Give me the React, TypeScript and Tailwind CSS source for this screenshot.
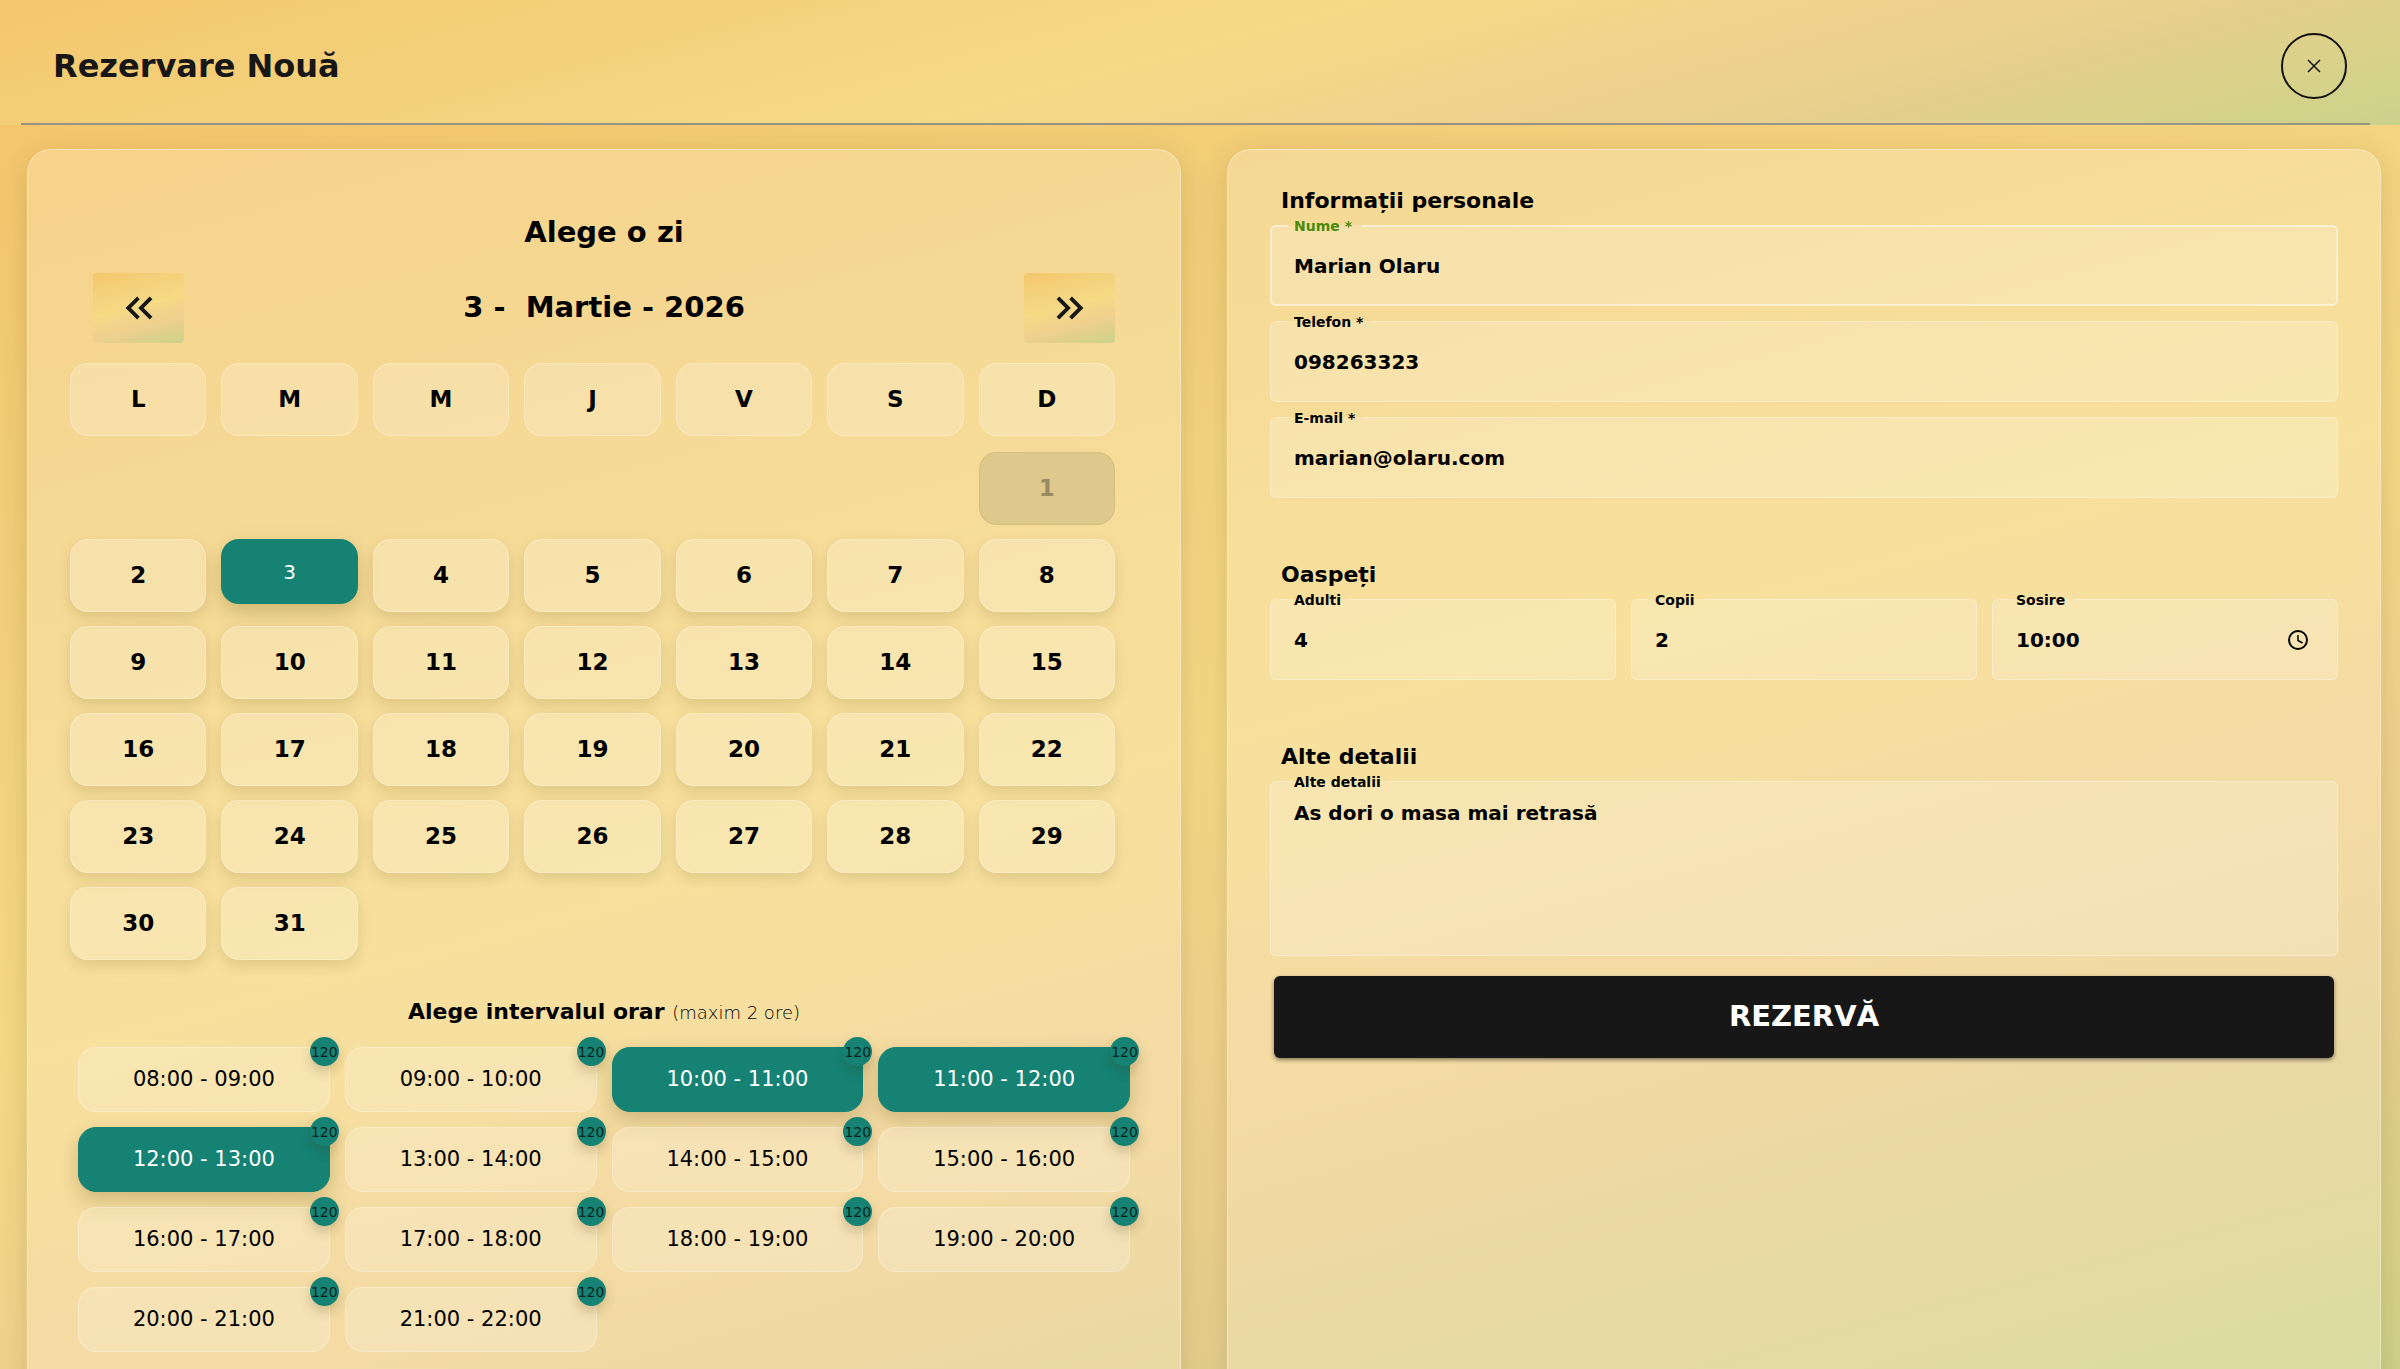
import { useState } from "react";
import type { ReactNode } from "react";
import { MdKeyboardDoubleArrowLeft, MdKeyboardDoubleArrowRight } from "react-icons/md";

const weekdays = ["L", "M", "M", "J", "V", "S", "D"];
const days = Array.from({ length: 31 }, (_, i) => i + 1);
const hours = Array.from({ length: 14 }, (_, i) => i + 8);
const label = (h: number) => `${String(h).padStart(2, "0")}:00 - ${String(h + 1).padStart(2, "0")}:00`;

const sunset =
  "bg-[linear-gradient(165deg,#f5c76d_0%,#f3d07a_22%,#f6da85_48%,#f2d38c_62%,#efd18e_70%,#e4cf8d_80%,#dad28a_89%,#cad28b_100%)]";
const panel =
  "rounded-3xl border border-white/35 bg-white/20 px-[42px] pb-16 shadow-[0_8px_32px_rgba(60,45,0,0.16)]";
const cell =
  "flex h-[73px] items-center justify-center rounded-[18px] border border-white/25 bg-white/20 text-[23px] font-bold";
const control = "h-full w-full bg-transparent px-6 text-xl font-bold text-black outline-none";

function Field({
  id,
  title,
  active = false,
  tall = false,
  children,
}: {
  id: string;
  title: string;
  active?: boolean;
  tall?: boolean;
  children: ReactNode;
}) {
  return (
    <div className={`relative rounded-md bg-white/20 ${tall ? "h-[175px]" : "h-[81px]"}`}>
      <label
        htmlFor={id}
        className={`absolute -top-[11px] left-6 text-sm leading-6 font-bold ${active ? "text-[#4b8a08]" : "text-black"}`}
      >
        {title}
      </label>
      <fieldset
        aria-hidden="true"
        className={`pointer-events-none absolute inset-0 rounded-md px-4 ${
          active ? "border-2 border-white/45" : "border border-white/30"
        }`}
      >
        <legend className="invisible h-0 px-2 text-sm font-bold">{title}</legend>
      </fieldset>
      {children}
    </div>
  );
}

function NavButton({ title, children }: { title: string; children: ReactNode }) {
  return (
    <button
      type="button"
      aria-label={title}
      className={`flex h-[70px] w-[91px] items-center justify-center rounded text-[#171717] ${sunset}`}
    >
      {children}
    </button>
  );
}

function SectionTitle({ children }: { children: ReactNode }) {
  return <h2 className="pl-[11px] text-[22px] leading-8 font-bold">{children}</h2>;
}

export default function App() {
  const [day, setDay] = useState(3);
  const [slots, setSlots] = useState<number[]>([10, 11, 12]);
  const toggle = (h: number) => setSlots((s) => (s.includes(h) ? s.filter((v) => v !== h) : [...s, h]));

  return (
    <div className="flex h-screen flex-col overflow-hidden font-['DejaVu_Sans',sans-serif] text-black">
      <header className={`px-[21px] pr-[30px] ${sunset}`}>
        <div className="flex h-[125px] items-center justify-between border-b-2 border-[#999488] pt-2 pr-[23px] pl-8">
          <h1 className="text-[32px] font-bold text-[#171717]">Rezervare Nouă</h1>
          <button
            type="button"
            aria-label="Închide"
            className="flex size-[66px] items-center justify-center rounded-full border-2 border-[#111]"
          >
            <svg viewBox="0 0 14 14" className="size-[14px]" fill="none" stroke="#111" strokeWidth="1.5">
              <path d="M1 1l12 12M13 1L1 13" />
            </svg>
          </button>
        </div>
      </header>

      <main className="flex min-h-0 flex-1 overflow-hidden">
        <div
          className={`grid h-max min-h-full flex-1 grid-cols-2 gap-[46px] pt-6 pr-[19px] pb-8 pl-[27px] ${sunset}`}
        >
          <section className={`${panel} pt-[62px]`}>
            <h2 className="text-center text-[29px] leading-10 font-bold">Alege o zi</h2>
            <div className="mx-[23px] mt-[21px] flex items-center justify-between">
              <NavButton title="Luna anterioară">
                <MdKeyboardDoubleArrowLeft className="size-[46px]" />
              </NavButton>
              <p className="text-[29px] font-bold whitespace-pre">3 -  Martie - 2026</p>
              <NavButton title="Luna următoare">
                <MdKeyboardDoubleArrowRight className="size-[46px]" />
              </NavButton>
            </div>

            <div className="mt-5 mr-[23px] grid grid-cols-7 gap-x-[15px]">
              {weekdays.map((d, i) => (
                <div key={i} className={cell}>
                  {d}
                </div>
              ))}
            </div>
            <div className="mt-4 mr-[23px] grid grid-cols-7 gap-x-[15px] gap-y-[14px]">
              {days.map((d) =>
                d === 1 ? (
                  <button
                    key={d}
                    type="button"
                    disabled
                    className="col-start-7 flex h-[73px] items-center justify-center rounded-[18px] border border-black/5 bg-[#dfc88c] text-[23px] font-bold text-[#9a8a62]"
                  >
                    {d}
                  </button>
                ) : d === day ? (
                  <button
                    key={d}
                    type="button"
                    aria-pressed="true"
                    className="flex h-[65px] items-center justify-center rounded-[18px] bg-[#158274] text-xl text-white shadow-[0_8px_20px_rgba(90,70,0,0.25)]"
                  >
                    {d}
                  </button>
                ) : (
                  <button
                    key={d}
                    type="button"
                    onClick={() => setDay(d)}
                    className={`${cell} shadow-[0_6px_14px_rgba(90,70,0,0.15)]`}
                  >
                    {d}
                  </button>
                ),
              )}
            </div>

            <h2 className="mt-8 text-center text-[22px] leading-10 font-bold">
              Alege intervalul orar <small className="text-lg font-extralight">(maxim 2 ore)</small>
            </h2>
            <div className="mx-2 mt-[15px] grid grid-cols-4 gap-[15px]">
              {hours.map((h) => (
                <button
                  key={h}
                  type="button"
                  aria-pressed={slots.includes(h)}
                  onClick={() => toggle(h)}
                  className={`relative h-[65px] rounded-[18px] border text-[21px] ${
                    slots.includes(h)
                      ? "border-[#158274] bg-[#158274] text-white shadow-[0_8px_20px_rgba(90,70,0,0.25)]"
                      : "border-white/25 bg-white/20"
                  }`}
                >
                  {label(h)}
                  <span className="absolute -top-[11px] -right-[10px] flex size-[29px] items-center justify-center rounded-full bg-[#158274] text-sm text-[#0c2420] shadow-[0_6px_12px_rgba(60,50,0,0.2)]">
                    120
                  </span>
                </button>
              ))}
            </div>
          </section>

          <section className={`${panel} pt-[35px]`}>
            <form onSubmit={(e) => e.preventDefault()}>
              <SectionTitle>Informații personale</SectionTitle>
              <div className="mt-2 grid gap-[15px]">
                <Field id="nume" title="Nume *" active>
                  <input id="nume" type="text" defaultValue="Marian Olaru" className={control} />
                </Field>
                <Field id="telefon" title="Telefon *">
                  <input id="telefon" type="tel" defaultValue="098263323" className={control} />
                </Field>
                <Field id="email" title="E-mail *">
                  <input id="email" type="email" defaultValue="marian@olaru.com" className={control} />
                </Field>
              </div>

              <div className="mt-[61px]">
                <SectionTitle>Oaspeți</SectionTitle>
              </div>
              <div className="mt-2 grid grid-cols-3 gap-[15px]">
                <Field id="adulti" title="Adulti">
                  <input id="adulti" type="text" inputMode="numeric" defaultValue="4" className={control} />
                </Field>
                <Field id="copii" title="Copii">
                  <input id="copii" type="text" inputMode="numeric" defaultValue="2" className={control} />
                </Field>
                <Field id="sosire" title="Sosire">
                  <div className="flex h-full items-center pr-7">
                    <input id="sosire" type="text" defaultValue="10:00" className={control} />
                    <svg
                      viewBox="0 0 24 24"
                      className="size-6 shrink-0"
                      fill="none"
                      stroke="#000"
                      strokeWidth="2"
                      aria-hidden="true"
                    >
                      <circle cx="12" cy="12" r="9" />
                      <path d="M12 7v5.5l4.5 2.5" strokeWidth="1.5" />
                    </svg>
                  </div>
                </Field>
              </div>

              <div className="mt-[61px]">
                <SectionTitle>Alte detalii</SectionTitle>
              </div>
              <div className="mt-2">
                <Field id="detalii" title="Alte detalii" tall>
                  <textarea
                    id="detalii"
                    defaultValue="As dori o masa mai retrasă"
                    className={`${control} block resize-none pt-4 leading-8`}
                  />
                </Field>
              </div>
              <div className="mx-1 mt-5">
                <button
                  type="submit"
                  className="h-[82px] w-full rounded-md bg-[#171717] text-[29px] font-bold text-white shadow-[0_2px_4px_rgba(0,0,0,0.45)]"
                >
                  REZERVĂ
                </button>
              </div>
            </form>
          </section>
        </div>
      </main>
    </div>
  );
}
